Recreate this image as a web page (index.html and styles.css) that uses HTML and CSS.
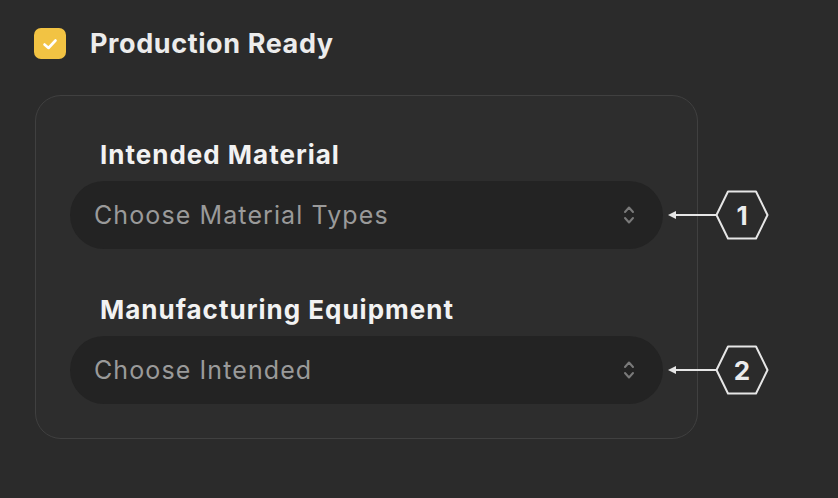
FILE: index.html
```html
<!DOCTYPE html>
<html>
<head>
<meta charset="utf-8">
<link rel="stylesheet" href="styles.css">
</head>
<body>
<div class="header">
  <span class="checkbox">
    <svg width="18" height="14" viewBox="0 0 18 14"><path d="M3.5 7.5 L7.5 11 L14.5 3.5" fill="none" stroke="#ffffff" stroke-width="2.6" stroke-linecap="round" stroke-linejoin="round"/></svg>
  </span>
  <span class="title">Production Ready</span>
</div>
<div class="panel">
  <div class="label">Intended Material</div>
  <div class="select">
    <span class="placeholder">Choose Material Types</span>
    <svg class="chev" width="12" height="22" viewBox="0 0 12 22"><path d="M2 8 L6 3.5 L10 8 M2 14 L6 18.5 L10 14" fill="none" stroke="#7a7a7a" stroke-width="2" stroke-linecap="round" stroke-linejoin="round"/></svg>
    <div class="annot">
      <svg class="arrow" width="48" height="12" viewBox="0 0 48 12"><path d="M0 6 L8 2 L8 10 Z" fill="#e6e6e6"/><path d="M6 6 H48" stroke="#e6e6e6" stroke-width="2"/></svg>
      <div class="hex">
        <svg width="54" height="50" viewBox="0 0 54 50"><path d="M1.5 25 L13 1.5 L41 1.5 L52.5 25 L41 48.5 L13 48.5 Z" fill="none" stroke="#e6e6e6" stroke-width="2" stroke-linejoin="round"/></svg>
        <span class="num">1</span>
      </div>
    </div>
  </div>
  <div class="label second">Manufacturing Equipment</div>
  <div class="select">
    <span class="placeholder">Choose Intended</span>
    <svg class="chev" width="12" height="22" viewBox="0 0 12 22"><path d="M2 8 L6 3.5 L10 8 M2 14 L6 18.5 L10 14" fill="none" stroke="#7a7a7a" stroke-width="2" stroke-linecap="round" stroke-linejoin="round"/></svg>
    <div class="annot">
      <svg class="arrow" width="48" height="12" viewBox="0 0 48 12"><path d="M0 6 L8 2 L8 10 Z" fill="#e6e6e6"/><path d="M6 6 H48" stroke="#e6e6e6" stroke-width="2"/></svg>
      <div class="hex">
        <svg width="54" height="50" viewBox="0 0 54 50"><path d="M1.5 25 L13 1.5 L41 1.5 L52.5 25 L41 48.5 L13 48.5 Z" fill="none" stroke="#e6e6e6" stroke-width="2" stroke-linejoin="round"/></svg>
        <span class="num">2</span>
      </div>
    </div>
  </div>
</div>
</body>
</html>
```
FILE: styles.css
```css
* { box-sizing: border-box; }
html, body {
  margin: 0;
  padding: 0;
  background: #2b2b2b;
  width: 838px;
  height: 498px;
  overflow: hidden;
  font-family: Inter, "Liberation Sans", sans-serif;
}
.header {
  display: flex;
  align-items: center;
  gap: 24px;
  padding: 28px 0 0 34px;
  height: 59px;
}
.checkbox {
  width: 32px;
  height: 31px;
  border-radius: 7px;
  background: #f2c343;
  display: flex;
  align-items: center;
  justify-content: center;
}
.title {
  color: #ececec;
  font-size: 27px;
  font-weight: 700;
  letter-spacing: 0.6px;
}
.panel {
  margin: 36px 0 0 35px;
  width: 663px;
  height: 344px;
  border: 1px solid #404040;
  border-radius: 26px;
  background: #2d2d2d;
  padding: 44px 34px 0 34px;
}
.label {
  color: #f2f2f2;
  font-size: 26px;
  font-weight: 700;
  line-height: 30px;
  padding-left: 30px;
  margin-bottom: 11px;
  letter-spacing: 1px;
}
.label.second { margin-top: 46px; }
.select {
  position: relative;
  height: 68px;
  border-radius: 34px;
  background: #232323;
  display: flex;
  align-items: center;
  justify-content: space-between;
  padding: 0 28px 0 24px;
}
.placeholder {
  color: #9a9a9a;
  font-size: 25px;
  font-weight: 400;
  letter-spacing: 1.1px;
}
.chev { display: block; }
.annot {
  position: absolute;
  left: calc(100% + 5px);
  top: 50%;
  transform: translateY(-50%);
  display: flex;
  align-items: center;
}
.arrow { display: block; }
.hex {
  position: relative;
  width: 54px;
  height: 50px;
  margin-left: -1px;
}
.hex svg { display: block; }
.num {
  position: absolute;
  inset: 0;
  display: flex;
  align-items: center;
  justify-content: center;
  color: #ececec;
  font-size: 26px;
  font-weight: 700;
}
```
